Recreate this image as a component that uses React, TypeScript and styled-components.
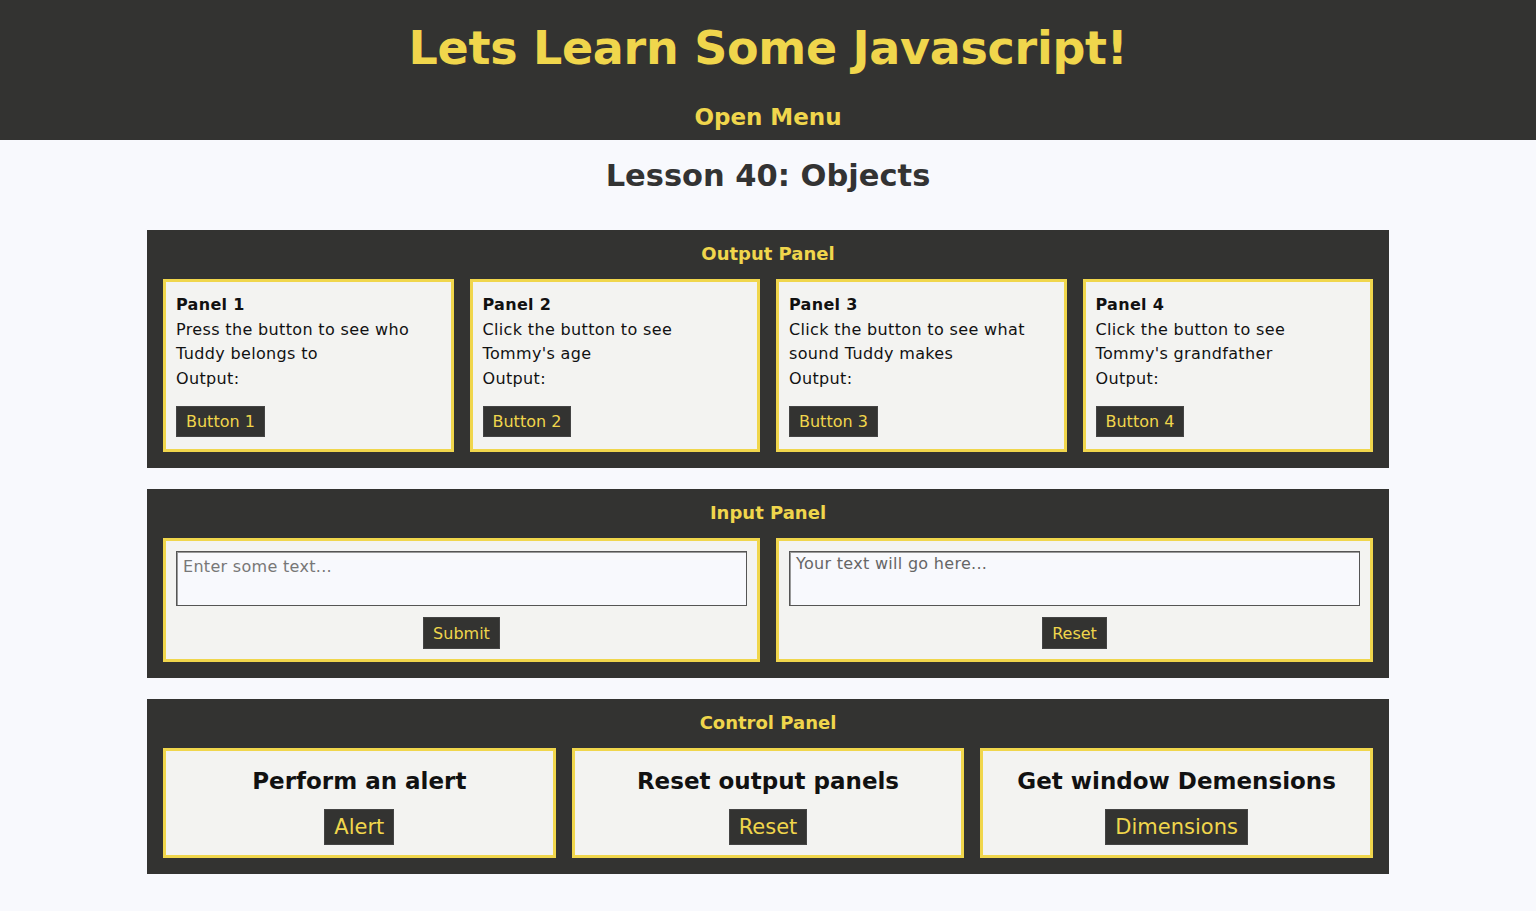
import React from "react";
import styled, { createGlobalStyle } from "styled-components";

const DARK = "#333331";
const YELLOW = "#f0d64c";

const Global = createGlobalStyle`
  * { box-sizing: border-box; }
  html, body { margin: 0; padding: 0; }
  body {
    background: #f8f9fd;
    font-family: "DejaVu Sans", "Noto Sans", sans-serif;
    color: #111;
  }
`;

const Header = styled.header`
  background: ${DARK};
  height: 140px;
  display: flex;
  flex-direction: column;
  align-items: center;
  padding-top: 19px;
`;

const Title = styled.h1`
  margin: 0;
  color: ${YELLOW};
  font-size: 46px;
  line-height: 58px;
  font-weight: 700;
  letter-spacing: -0.3px;
`;

const MenuLink = styled.a`
  margin-top: 26px;
  color: ${YELLOW};
  font-size: 23px;
  line-height: 29px;
  font-weight: 700;
  cursor: pointer;
`;

const Lesson = styled.h2`
  margin: 15px 0 0;
  text-align: center;
  color: #333;
  font-size: 30.5px;
  line-height: 41px;
  font-weight: 700;
`;

const Main = styled.main`
  width: 1242px;
  margin: 34px auto 0;
  display: flex;
  flex-direction: column;
  gap: 21px;
`;

const Panel = styled.section`
  background: ${DARK};
  padding: 12px 16px 16px;
`;

const PanelTitle = styled.h3`
  margin: 0 0 13px;
  text-align: center;
  color: ${YELLOW};
  font-size: 18px;
  line-height: 24px;
  font-weight: 700;
`;

const Grid = styled.div<{ $cols: number }>`
  display: grid;
  grid-template-columns: repeat(${(p) => p.$cols}, 1fr);
  gap: 16px;
`;

const Card = styled.div<{ $center?: boolean }>`
  background: #f3f3f1;
  border: 3px solid ${YELLOW};
  padding: 11px 10px 12px;
  display: flex;
  flex-direction: column;
  align-items: ${(p) => (p.$center ? "center" : "flex-start")};
`;

const InputCard = styled(Card)`
  padding: 10px 10px 10px;
`;

const ControlCard = styled(Card)`
  padding: 10px 10px 10px;
`;

const CardTitle = styled.div`
  font-size: 16px;
  line-height: 24.5px;
  font-weight: 700;
  letter-spacing: 0.3px;
  color: #111;
`;

const CardText = styled.div`
  font-size: 16px;
  line-height: 24.5px;
  letter-spacing: 0.35px;
  color: #111;
`;

const Btn = styled.button<{ $big?: boolean }>`
  background: ${DARK};
  color: ${YELLOW};
  border: 1px solid #444;
  font-family: inherit;
  font-size: ${(p) => (p.$big ? "21px" : "16px")};
  height: ${(p) => (p.$big ? "36px" : "31px")};
  padding: 0 9px;
  margin-top: ${(p) => (p.$big ? "0" : "15px")};
  cursor: pointer;
`;

const SmallBtn = styled(Btn)`
  height: 32px;
  margin-top: 11px;
`;

const TextArea = styled.textarea`
  width: 100%;
  height: 55px;
  resize: none;
  background: #f8f9fd;
  border: 1px solid #555;
  box-shadow: inset 1px 1px 0 #999;
  font-family: inherit;
  font-size: 16px;
  letter-spacing: 0.3px;
  padding: 5px 6px;
  color: #333;
  &::placeholder { color: #777; }
`;

const OutputBox = styled.div`
  width: 100%;
  height: 55px;
  background: #f8f9fd;
  border: 1px solid #555;
  box-shadow: inset 1px 1px 0 #999;
  font-size: 16px;
  letter-spacing: 0.3px;
  padding: 2px 6px;
  color: #666;
`;

const ControlTitle = styled.h4`
  margin: 0 0 8px;
  font-size: 23px;
  line-height: 40px;
  font-weight: 700;
  color: #111;
  text-align: center;
`;

const Footer = styled.footer`
  margin-top: 37px;
  height: 40px;
  background: ${DARK};
`;

const outputs = [
  { t: "Panel 1", d: "Press the button to see who Tuddy belongs to", b: "Button 1" },
  { t: "Panel 2", d: "Click the button to see Tommy's age", b: "Button 2" },
  { t: "Panel 3", d: "Click the button to see what sound Tuddy makes", b: "Button 3" },
  { t: "Panel 4", d: "Click the button to see Tommy's grandfather", b: "Button 4" },
];

const controls = [
  { t: "Perform an alert", b: "Alert" },
  { t: "Reset output panels", b: "Reset" },
  { t: "Get window Demensions", b: "Dimensions" },
];

export default function App() {
  return (
    <>
      <Global />
      <Header>
        <Title>Lets Learn Some Javascript!</Title>
        <MenuLink>Open Menu</MenuLink>
      </Header>
      <Lesson>Lesson 40: Objects</Lesson>
      <Main>
        <Panel>
          <PanelTitle>Output Panel</PanelTitle>
          <Grid $cols={4}>
            {outputs.map((o) => (
              <Card key={o.t}>
                <CardTitle>{o.t}</CardTitle>
                <CardText>{o.d}</CardText>
                <CardText>Output:</CardText>
                <Btn>{o.b}</Btn>
              </Card>
            ))}
          </Grid>
        </Panel>
        <Panel>
          <PanelTitle>Input Panel</PanelTitle>
          <Grid $cols={2}>
            <InputCard $center>
              <TextArea placeholder="Enter some text..." />
              <SmallBtn>Submit</SmallBtn>
            </InputCard>
            <InputCard $center>
              <OutputBox>Your text will go here...</OutputBox>
              <SmallBtn>Reset</SmallBtn>
            </InputCard>
          </Grid>
        </Panel>
        <Panel>
          <PanelTitle>Control Panel</PanelTitle>
          <Grid $cols={3}>
            {controls.map((c) => (
              <ControlCard key={c.t} $center>
                <ControlTitle>{c.t}</ControlTitle>
                <Btn $big>{c.b}</Btn>
              </ControlCard>
            ))}
          </Grid>
        </Panel>
      </Main>
      <Footer />
    </>
  );
}
